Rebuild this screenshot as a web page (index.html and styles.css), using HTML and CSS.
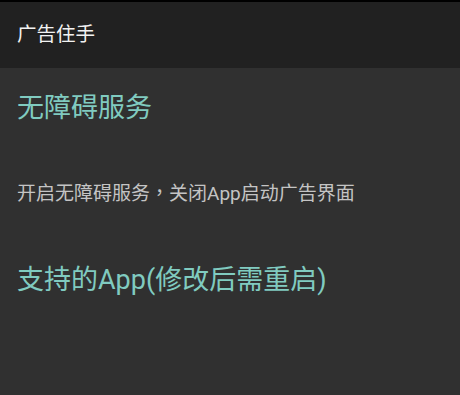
FILE: index.html
```html
<!DOCTYPE html>
<html lang="zh-CN">
<head>
    <meta charset="UTF-8">
    <meta name="viewport" content="width=device-width, initial-scale=1.0">
    <title>广告住手</title>
    <link rel="stylesheet" href="styles.css">
</head>
<body>
    <div class="status-strip"></div>
    <header class="toolbar">
        <h1 class="toolbar-title">广告住手</h1>
    </header>
    <main class="prefs">
        <h2 class="pref-category">无障碍服务</h2>
        <p class="pref-summary">开启无障碍服务<span class="punct" lang="zh-TW">，</span>关闭App启动广告界面</p>
        <h2 class="pref-category pref-category-apps">支持的App(修改后需重启)</h2>
    </main>
</body>
</html>
```

FILE: styles.css
```css
html, body {
    margin: 0;
    padding: 0;
}
body {
    font-family: "Roboto", "Noto Sans CJK SC", sans-serif;
    background: #303030;
    height: 395px;
    overflow: hidden;
}
.status-strip {
    height: 2px;
    background: #000;
}
.toolbar {
    height: 66px;
    background: #212121;
    display: flex;
    align-items: center;
    padding: 0 17px;
}
.toolbar-title {
    margin: 0;
    font-size: 19.5px;
    font-weight: normal;
    line-height: 24px;
    color: #f2f2f2;
}
.prefs {
    padding: 0 17px;
}
.pref-category {
    margin: 24px 0 0;
    font-size: 27px;
    font-weight: normal;
    line-height: 32px;
    color: #80cbc0;
}
.pref-summary {
    margin: 56px 0 0;
    font-size: 19px;
    line-height: 24px;
    color: #c4c4c4;
}
.punct {
    font-family: "Noto Sans CJK TC", sans-serif;
}
.pref-category-apps {
    margin-top: 58px;
}
```
